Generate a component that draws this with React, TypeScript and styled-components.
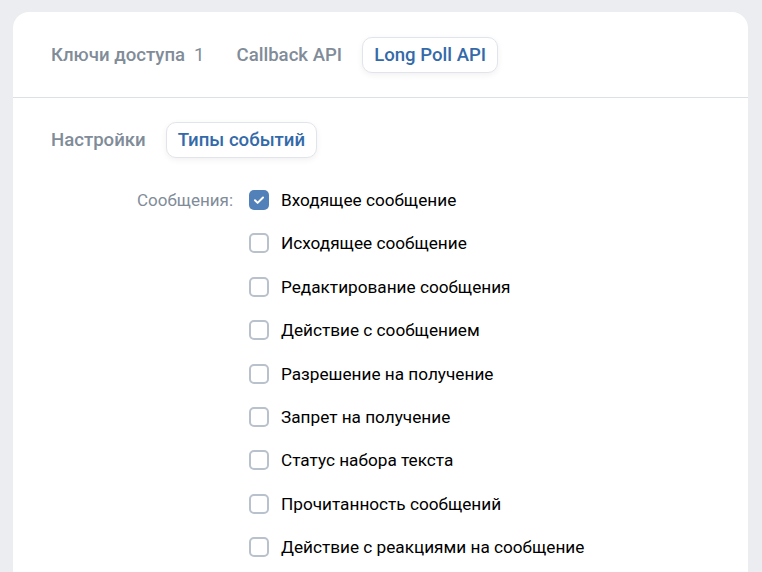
import React, { FC, useState } from 'react';
import styled, { createGlobalStyle } from 'styled-components';

const GlobalStyle = createGlobalStyle`
   html, body {
      margin: 0;
      padding: 0;
      background: #ebedf0;
      font-family: Roboto, "Noto Sans", Arial, sans-serif;
      -webkit-font-smoothing: antialiased;
   }
`;

const EVENTS = [
   'Входящее сообщение',
   'Исходящее сообщение',
   'Редактирование сообщения',
   'Действие с сообщением',
   'Разрешение на получение',
   'Запрет на получение',
   'Статус набора текста',
   'Прочитанность сообщений',
   'Действие с реакциями на сообщение'
];

const App: FC = (): JSX.Element => {
   const [checked, setChecked] = useState<boolean[]>(EVENTS.map((_, i) => i === 0));

   const toggle = (i: number) => setChecked(prev => prev.map((v, j) => (j === i ? !v : v)));

   return (
      <Page>
         <GlobalStyle />
         <Card>
            <TopTabs>
               <Tab>
                  Ключи доступа<Counter>1</Counter>
               </Tab>
               <Tab>Callback API</Tab>
               <Tab active>Long Poll API</Tab>
            </TopTabs>
            <Content>
               <SubTabs>
                  <Tab>Настройки</Tab>
                  <Tab active>Типы событий</Tab>
               </SubTabs>
               <Group>
                  <GroupLabel>Сообщения:</GroupLabel>
                  <Options>
                     {EVENTS.map((name, i) => (
                        <Option key={name} onClick={() => toggle(i)}>
                           <Box checked={checked[i]}>
                              {checked[i] && (
                                 <svg width='14' height='14' viewBox='0 0 14 14'>
                                    <path
                                       d='M3 7.3l2.6 2.6L11 4.5'
                                       fill='none'
                                       stroke='#fff'
                                       strokeWidth='2'
                                       strokeLinecap='round'
                                       strokeLinejoin='round'
                                    />
                                 </svg>
                              )}
                           </Box>
                           <OptionText>{name}</OptionText>
                        </Option>
                     ))}
                  </Options>
               </Group>
            </Content>
         </Card>
      </Page>
   );
};

export default App;

const Page = styled.div`
   padding: 12px 14px 0 13px;
   height: 572px;
   box-sizing: border-box;
   overflow: hidden;
`;

const Card = styled.div`
   background: #fff;
   border-radius: 16px 16px 0 0;
   min-height: 600px;
`;

const TopTabs = styled.div`
   display: flex;
   align-items: center;
   gap: 8px;
   padding: 25px 22px 24px 26px;
   border-bottom: 1px solid #dce1e6;
`;

const SubTabs = styled.div`
   display: flex;
   align-items: center;
   gap: 8px;
   margin-left: 2px;
`;

const Tab = styled.div<{ active?: boolean }>`
   display: flex;
   align-items: center;
   height: 36px;
   padding: 0 11px;
   box-sizing: border-box;
   border-radius: 10px;
   font-size: 18.6px;
   font-weight: 500;
   color: ${p => (p.active ? '#346aa9' : '#818c99')};
   background: ${p => (p.active ? '#fff' : 'transparent')};
   border: 1px solid ${p => (p.active ? '#e1e5eb' : 'transparent')};
   box-shadow: ${p => (p.active ? '0 2px 6px rgba(0, 0, 0, 0.06)' : 'none')};
   cursor: pointer;
   white-space: nowrap;
`;

const Counter = styled.span`
   margin-left: 9px;
   font-weight: 400;
   color: #818c99;
`;

const Content = styled.div`
   padding: 24px 24px 0 24px;
`;

const Group = styled.div`
   display: flex;
   margin-top: 32px;
`;

const GroupLabel = styled.div`
   width: 196px;
   text-align: right;
   font-size: 17px;
   color: #818c99;
   line-height: 36px;
   margin-top: -8px;
`;

const Options = styled.div`
   display: flex;
   flex-direction: column;
   margin-left: 16px;
`;

const Option = styled.label`
   display: flex;
   align-items: center;
   height: 20px;
   margin-bottom: 23.4px;
   cursor: pointer;
`;

const Box = styled.span<{ checked: boolean }>`
   display: flex;
   align-items: center;
   justify-content: center;
   width: 20px;
   height: 20px;
   box-sizing: border-box;
   border-radius: 5px;
   background: ${p => (p.checked ? '#5181b8' : '#fff')};
   border: ${p => (p.checked ? 'none' : '2px solid #b8c1cc')};
`;

const OptionText = styled.span`
   margin-left: 12px;
   font-size: 17.2px;
   color: #000;
`;
